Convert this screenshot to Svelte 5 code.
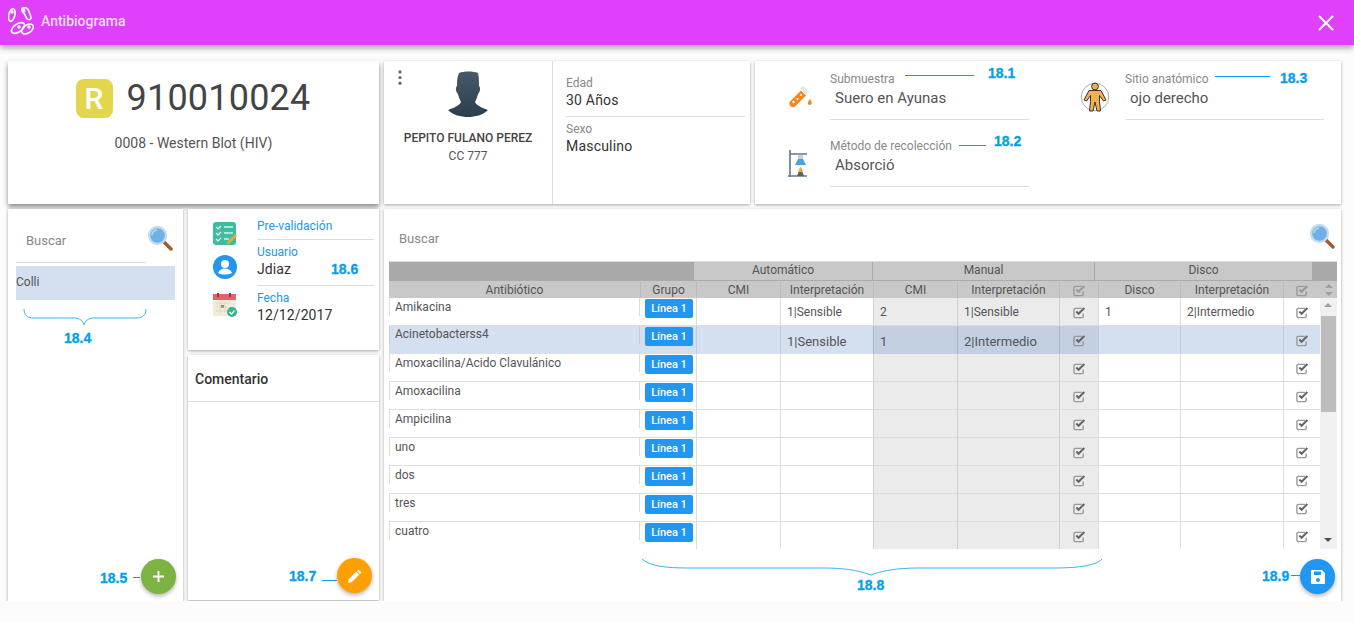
<script>
  const rows = [
    { name: 'Amikacina', auto: '1|Sensible', cmi: '2', manual: '1|Sensible', disco: '1', discoInt: '2|Intermedio' },
    { name: 'Acinetobacterss4', auto: '1|Sensible', cmi: '1', manual: '2|Intermedio', selected: true },
    { name: 'Amoxacilina/Acido Clavulánico' },
    { name: 'Amoxacilina' },
    { name: 'Ampicilina' },
    { name: 'uno' },
    { name: 'dos' },
    { name: 'tres' },
    { name: 'cuatro' }
  ];

  const notes = [
    { label: '18.1', x: 988, y: 66 },
    { label: '18.3', x: 1280, y: 71 },
    { label: '18.2', x: 994, y: 134 },
    { label: '18.6', x: 331, y: 262 },
    { label: '18.4', x: 64, y: 331 },
    { label: '18.5', x: 100, y: 571 },
    { label: '18.7', x: 289, y: 569 },
    { label: '18.8', x: 857, y: 578 },
    { label: '18.9', x: 1262, y: 569 }
  ];

  const leaders = [
    { x: 905, y: 75, w: 69 },
    { x: 1215, y: 76, w: 55 },
    { x: 959, y: 145, w: 27 },
    { x: 133, y: 577, w: 7 },
    { x: 322, y: 580, w: 15 },
    { x: 1291, y: 575, w: 9 }
  ];
</script>

{#snippet check()}
  <svg class="check" viewBox="0 0 14 14" width="13" height="13">
    <path d="M11 8v3a1.5 1.5 0 0 1-1.5 1.5h-7A1.5 1.5 0 0 1 1 11V4a1.5 1.5 0 0 1 1.5-1.5h7" fill="none" stroke="#999" stroke-width="1.5"/>
    <path d="M3.600 6 6 8.400 12.200 2.200" fill="none" stroke="#666" stroke-width="2.200"/>
  </svg>
{/snippet}

{#snippet lens()}
  <svg class="lens" viewBox="0 0 26 26" width="26" height="26">
    <path d="M16 16 24 24" stroke="#a5582a" stroke-width="3.400" stroke-linecap="round"/>
    <circle cx="10.500" cy="10.500" r="8.500" fill="#6fb1e6" stroke="#c5dcef" stroke-width="2.400"/>
    <path d="M5 10a5.500 5.500 0 0 1 5-5" fill="none" stroke="#a9d3f3" stroke-width="2"/>
  </svg>
{/snippet}

<header class="bar">
  <div class="brand">
    <svg viewBox="0 0 26 28" width="26" height="28" fill="none" stroke="#fff" stroke-width="1.600">
      <ellipse cx="3.800" cy="8" rx="3" ry="6.500" transform="rotate(14 3.800 8)"/>
      <path d="M14 1.500c3-2 6-.5 7 3s3 6 1.500 7.500-4 .5-5-3-5-5-3.500-7.500z"/>
      <ellipse cx="10" cy="21" rx="7.500" ry="4" transform="rotate(-35 10 21)"/>
      <ellipse cx="19.500" cy="22" rx="6.500" ry="4" transform="rotate(-35 19.500 22)"/>
      <circle cx="4" cy="5" r="1" fill="#fff"/>
      <circle cx="15.500" cy="3.500" r="1.200" fill="#fff"/>
      <circle cx="11" cy="20" r="1" fill="#fff"/>
      <circle cx="21" cy="20" r="1" fill="#fff"/>
    </svg>
    <span>Antibiograma</span>
  </div>
  <svg class="close" viewBox="0 0 16 16" width="16" height="16">
    <path d="M1 1 15 15M15 1 1 15" stroke="#fff" stroke-width="2"/>
  </svg>
</header>

<main class="page">
  <section class="top">
    <div class="card sample">
      <div class="sample-id">
        <span class="badge-r">R</span>
        <span class="number">910010024</span>
      </div>
      <p>0008 - Western Blot (HIV)</p>
    </div>

    <div class="card patient">
      <div class="who">
        <svg class="kebab" viewBox="0 0 4 16" width="4" height="15" fill="#666">
          <circle cx="2" cy="2" r="1.700"/><circle cx="2" cy="8" r="1.700"/><circle cx="2" cy="14" r="1.700"/>
        </svg>
        <svg class="avatar" viewBox="0 0 40 46" width="40" height="46">
          <defs>
            <linearGradient id="skin" x1="0" y1="0" x2="0" y2="1">
              <stop offset="0" stop-color="#44596a"/><stop offset="1" stop-color="#2c3e4c"/>
            </linearGradient>
          </defs>
          <path fill="url(#skin)" d="M11 2c5-2 14-2 19 0 1 4 1 9 1 13 2 2 1 6-1 8-1 4-2 6-3 8 2 4 8 6 13 8-5 5-13 7-20 7S5 44 0 39c5-2 11-4 13-8-1-2-2-4-3-8-2-2-3-6-1-8 0-4 0-9 2-13z"/>
        </svg>
        <strong>PEPITO FULANO PEREZ</strong>
        <span>CC 777</span>
      </div>
      <div class="facts">
        <div class="fact line"><label>Edad</label><b>30 Años</b></div>
        <div class="fact"><label>Sexo</label><b>Masculino</b></div>
      </div>
    </div>

    <div class="card origin">
      <div class="origin-col">
        <div class="origin-item">
          <svg class="tube" viewBox="0 0 26 26" width="26" height="26">
            <path d="M17 1.500l6.500 6.500-3 3-6.500-6.500z" fill="#e8e8e8"/>
            <path d="M15 6.500l5 5L9 22.500a3.600 3.600 0 0 1-5-5z" fill="#f5891f"/>
            <circle cx="7.500" cy="18" r="1.200" fill="#fff"/><circle cx="11.500" cy="15" r="1" fill="#fff"/><circle cx="15" cy="11" r="1" fill="#fff"/>
            <path d="M24 15c1.200 2 1.800 3 1.800 4a2 2 0 0 1-4 0c0-1 .9-2 2.200-4z" fill="#f5891f"/>
          </svg>
          <div class="field"><label>Submuestra</label><span>Suero en Ayunas</span></div>
        </div>
        <div class="origin-item">
          <svg viewBox="0 0 26 32" width="26" height="32">
            <path d="M7 2v27M5 28h19M7 6h17" stroke="#62798c" stroke-width="1.600" fill="none"/>
            <rect x="15" y="7" width="5" height="4" fill="#c9d0d6"/>
            <path d="M15 11h5l3 6H12z" fill="#4aa3df"/>
            <path d="M17.500 19c1.500 1.500 2 3 2 5h-4c0-2 .8-3.500 2-5z" fill="#f5a623"/>
            <path d="M14 28l1.500-4h4l1.500 4z" fill="#4f6475"/>
          </svg>
          <div class="field"><label>Método de recolección</label><span>Absorció</span></div>
        </div>
      </div>
      <div class="origin-col">
        <div class="origin-item site">
          <svg viewBox="0 0 30 30" width="30" height="30">
            <circle cx="15" cy="15" r="13.800" fill="none" stroke="#9aa5a5" stroke-width=".9"/>
            <circle cx="15" cy="4.500" r="3.400" fill="#f2b14e" stroke="#333" stroke-width="1"/>
            <path d="M9 8.500h12l5 9.500-2.500 1-4-5.500v6l1 9.500h-3.500l-2-9-2 9H9.500l1-9.500v-6l-4 5.500-2.500-1z" fill="#f2b14e" stroke="#333" stroke-width="1"/>
          </svg>
          <div class="field"><label>Sitio anatómico</label><span>ojo derecho</span></div>
        </div>
      </div>
    </div>
  </section>

  <section class="bottom">
    <div class="card list">
      <div class="list-search">
        <span class="search-text">Buscar</span>
        {@render lens()}
      </div>
      <div class="list-item">Colli</div>
      <button class="fab green" aria-label="Agregar">
        <svg viewBox="0 0 12 12" width="11" height="11"><path d="M6 0v12M0 6h12" stroke="#fff" stroke-width="2"/></svg>
      </button>
    </div>

    <div class="middle">
      <div class="card status">
        <div class="status-icons">
          <svg viewBox="0 0 24 24" width="24" height="24">
            <rect x="0" y="0" width="23" height="23" rx="3" fill="#3dbd9f"/>
            <path d="M3 5l2 2 3-3M3 11l2 2 3-3M3 17l2 2 3-3" fill="none" stroke="#fff" stroke-width="1.200"/>
            <path d="M11 5h9M11 11h9M11 17h5" stroke="#d4f1ea" stroke-width="1.300"/>
            <path d="M13 23l2-4 7-7 2 2-7 7z" fill="#f0a63a"/>
          </svg>
          <svg viewBox="0 0 24 24" width="24" height="24">
            <circle cx="12" cy="12" r="12" fill="#2196f3"/>
            <circle cx="12" cy="9" r="4" fill="#fff"/>
            <path d="M5 18c1-3 4-4.500 7-4.500s6 1.500 7 4.500c-2 1-4 1.500-7 1.500s-5-.5-7-1.500z" fill="#fff"/>
          </svg>
          <svg viewBox="0 0 24 24" width="24" height="24">
            <rect x="0" y="1" width="23" height="22" fill="#f0ebda"/>
            <rect x="0" y="1" width="23" height="6" fill="#ef5d68"/>
            <rect x="4" y="0" width="2" height="4" fill="#555"/><rect x="16" y="0" width="2" height="4" fill="#555"/>
            <rect x="8" y="12" width="3" height="3" fill="#8a7a66"/>
            <path d="M3 10h14M3 14h12M3 18h11M7 9v11M12 9v11" stroke="#d9d2bc" stroke-width=".8"/>
            <circle cx="19" cy="19" r="5" fill="#35b58c"/>
            <path d="M16.500 19l2 2 3-3.500" fill="none" stroke="#fff" stroke-width="1.200"/>
          </svg>
        </div>
        <div class="status-text">
          <div class="status-row first"><label>Pre-validación</label></div>
          <div class="status-row second"><label>Usuario</label><b>Jdiaz</b></div>
          <div class="status-row third"><label>Fecha</label><b>12/12/2017</b></div>
        </div>
      </div>
      <div class="card comment">
        <h3>Comentario</h3>
        <button class="fab orange" aria-label="Editar">
          <svg viewBox="0 0 16 16" width="16" height="16" fill="#fff"><path d="M11.500 1.500 14.500 4.500 13 6 10 3zM9.200 3.800l3 3L5 14l-4 1 1-4z"/></svg>
        </button>
      </div>
    </div>

    <div class="card results">
      <div class="results-search">
        <span class="search-text">Buscar</span>
        {@render lens()}
      </div>
      <div class="grid">
        <div class="groups">
          <div class="g-blank"></div>
          <div class="g-auto">Automático</div>
          <div class="g-manual">Manual</div>
          <div class="g-disco">Disco</div>
          <div class="g-end"></div>
        </div>
        <div class="grid-body">
          <table>
            <colgroup>
              <col style="width:251px"/><col style="width:56px"/><col style="width:84px"/><col style="width:93px"/>
              <col style="width:84px"/><col style="width:102px"/><col style="width:39px"/>
              <col style="width:82px"/><col style="width:103px"/><col style="width:37px"/>
            </colgroup>
            <thead>
              <tr>
                <th>Antibiótico</th><th>Grupo</th><th>CMI</th><th>Interpretación</th>
                <th>CMI</th><th>Interpretación</th><th>{@render check()}</th>
                <th>Disco</th><th>Interpretación</th><th>{@render check()}</th>
              </tr>
            </thead>
            <tbody>
              {#each rows as r}
                <tr class:selected={r.selected}>
                  <td class="name"><span>{r.name}</span></td>
                  <td class="group"><span class="pill">Línea 1</span></td>
                  <td></td>
                  <td>{r.auto ?? ''}</td>
                  <td class="manual">{r.cmi ?? ''}</td>
                  <td class="manual">{r.manual ?? ''}</td>
                  <td class="manual mark">{@render check()}</td>
                  <td>{r.disco ?? ''}</td>
                  <td>{r.discoInt ?? ''}</td>
                  <td class="mark">{@render check()}</td>
                </tr>
              {/each}
            </tbody>
          </table>
          <div class="scroll">
            <div class="scroll-head">
              <svg viewBox="0 0 8 12" width="8" height="12" fill="#a0a0a0"><path d="M0 4 4 0l4 4zM0 8h8l-4 4z"/></svg>
            </div>
            <div class="scroll-track">
              <svg class="up" viewBox="0 0 8 4" width="8" height="4" fill="#a0a0a0"><path d="M0 4 4 0l4 4z"/></svg>
              <div class="thumb"></div>
              <svg class="down" viewBox="0 0 8 4" width="8" height="4" fill="#505050"><path d="M0 0h8L4 4z"/></svg>
            </div>
          </div>
        </div>
      </div>
      <button class="fab blue" aria-label="Guardar">
        <svg viewBox="0 0 16 16" width="16" height="16"><path fill="#fff" fill-rule="evenodd" d="M2 1h10l3 3v10a1 1 0 0 1-1 1H2a1 1 0 0 1-1-1V2a1 1 0 0 1 1-1zm2 1.500V6h7V2.500zM8 9a2 2 0 1 0 0 4 2 2 0 0 0 0-4z"/></svg>
      </button>
    </div>
  </section>
</main>

<!-- anotaciones sobre la captura -->
<div class="notes">
  {#each leaders as l}
    <i class="leader" style="left:{l.x}px;top:{l.y}px;width:{l.w}px"></i>
  {/each}
  {#each notes as n}
    <span class="note" style="left:{n.x}px;top:{n.y}px">{n.label}</span>
  {/each}
  <svg class="brace one" viewBox="0 0 124 18" width="124" height="18" fill="none" stroke="#35b6ee">
    <path d="M1 1c0 6 3 9 10 9h40c6 0 9 3 10 7 1-4 4-7 10-7h42c7 0 10-3 10-9"/>
  </svg>
  <svg class="brace two" viewBox="0 0 462 18" width="462" height="18" fill="none" stroke="#35b6ee">
    <path d="M1 1c8 7 24 9 45 9h135c25 0 38 3 49 7 11-4 24-7 49-7h135c25 0 42-3 47-9"/>
  </svg>
</div>

<style>
  :global(body) {
    background: #fcfcfc;
    font-family: Roboto, "Liberation Sans", sans-serif;
    overflow: hidden;
  }

  .bar {
    height: 45px;
    box-sizing: border-box;
    background: #e040fb;
    box-shadow: 0 3px 6px rgba(0, 0, 0, 0.35);
    display: flex;
    align-items: center;
    justify-content: space-between;
    padding: 0 20px 3px 8px;
    position: relative;
  }

  .brand {
    display: flex;
    align-items: center;
    gap: 7px;
    color: #f6dcfd;
    font-size: 14px;
    font-weight: 500;
  }

  .close {
    display: block;
    margin-top: 4px;
  }

  .page {
    padding: 16px 13px 0 8px;
    display: flex;
    flex-direction: column;
    gap: 5px;
  }

  .top, .bottom {
    display: flex;
  }

  .card {
    background: #fff;
    box-shadow: 0 1px 3px rgba(0, 0, 0, 0.35);
    position: relative;
    box-sizing: border-box;
  }

  .top {
    height: 143px;
  }

  .sample {
    width: 371px;
    margin-right: 5px;
    box-shadow: 0 3px 5px rgba(0, 0, 0, 0.45);
    text-align: center;
    padding-top: 15px;
  }

  .sample-id {
    display: flex;
    justify-content: center;
    align-items: center;
    gap: 14px;
    padding-right: 1px;
  }

  .badge-r {
    width: 37px;
    height: 39px;
    border-radius: 8px;
    background: #e3d64d;
    color: #fff;
    font-size: 30px;
    font-weight: 500;
    line-height: 39px;
  }

  .number {
    font-size: 36px;
    letter-spacing: 0.2px;
    color: #444;
    line-height: 44px;
  }

  .sample p {
    margin: 15px 0 0;
    font-size: 14px;
    color: #555;
  }

  .patient {
    width: 366px;
    margin-right: 5px;
    display: flex;
  }

  .who {
    width: 169px;
    flex: none;
    border-right: 1px solid #ddd;
    display: flex;
    flex-direction: column;
    align-items: center;
    padding-top: 10px;
    position: relative;
    box-sizing: border-box;
    font-size: 12px;
    color: #555;
  }

  .kebab {
    position: absolute;
    left: 14px;
    top: 9px;
  }

  .who strong {
    font-weight: 500;
    color: #444;
    margin-top: 13px;
    line-height: 16px;
  }

  .who span {
    margin-top: 2px;
    line-height: 16px;
  }

  .facts {
    flex: 1;
    padding: 14px 5px 0 13px;
  }

  .fact {
    display: flex;
    flex-direction: column;
    font-size: 12px;
    height: 47px;
    box-sizing: border-box;
  }

  .fact.line {
    border-bottom: 1px solid #ddd;
    height: 42px;
    margin-bottom: 4px;
  }

  label {
    font-size: 12px;
    line-height: 16px;
    color: #888;
  }

  .fact b {
    font-size: 14px;
    font-weight: 400;
    letter-spacing: 0.2px;
    color: #333;
    line-height: 18px;
  }

  .origin {
    width: 586px;
    display: flex;
    padding: 9px 0 0 28px;
  }

  .origin-col {
    width: 295px;
    flex: none;
    display: flex;
    flex-direction: column;
    gap: 17px;
  }

  .origin-item {
    display: flex;
    align-items: center;
    gap: 21px;
    height: 50px;
  }

  .origin-item svg {
    flex: none;
    margin-top: 3px;
  }

  .origin-item svg.tube {
    margin-left: 3px;
    margin-right: -3px;
  }

  .origin-item.site {
    gap: 15px;
    margin-left: 2px;
  }

  .field {
    width: 199px;
    height: 50px;
    box-sizing: border-box;
    border-bottom: 1px solid #ddd;
    padding-top: 1px;
    display: flex;
    flex-direction: column;
    gap: 1px;
  }

  .field span {
    font-size: 15px;
    color: #555;
    padding-left: 5px;
    line-height: 20px;
  }

  .bottom {
    height: 392px;
  }

  .list {
    width: 175px;
    margin-right: 5px;
    padding: 8px 8px 0;
  }

  .list-search {
    display: flex;
    align-items: center;
    justify-content: space-between;
    height: 46px;
  }

  .list-search .search-text {
    flex: none;
    width: 130px;
    height: 46px;
    line-height: 48px;
    padding-left: 10px;
    box-sizing: border-box;
    border-bottom: 1px solid #ddd;
  }

  .list-search .lens {
    margin: -5px 2px 0 0;
  }

  .search-text {
    font-size: 13px;
    color: #888;
  }

  .list-item {
    margin-top: 3px;
    height: 34px;
    line-height: 32px;
    background: #d4dff0;
    font-size: 12px;
    color: #555;
  }

  .middle {
    width: 191px;
    margin-right: 5px;
    display: flex;
    flex-direction: column;
    gap: 5px;
  }

  .status {
    height: 141px;
    display: flex;
    padding: 13px 5px 0 25px;
  }

  .status-icons {
    width: 44px;
    flex: none;
    display: flex;
    flex-direction: column;
    gap: 9px;
  }

  .status-icons svg:last-child {
    margin-top: 5px;
  }

  .status-text {
    flex: 1;
    margin-top: -4px;
  }

  .status-row {
    display: flex;
    flex-direction: column;
    box-sizing: border-box;
    border-bottom: 1px solid #ddd;
  }

  .status-row label {
    color: #2196f3;
  }

  .status-row b {
    font-size: 14px;
    font-weight: 400;
    letter-spacing: 0.1px;
    color: #333;
    line-height: 18px;
  }

  .status-row.first { height: 22px; }
  .status-row.second { height: 46px; padding-top: 4px; }
  .status-row.third { border: 0; padding-top: 4px; }

  .comment {
    flex: none;
    height: 245px;
  }

  .comment h3 {
    margin: 0;
    height: 47px;
    box-sizing: border-box;
    border-bottom: 1px solid #ddd;
    padding: 16px 0 0 7px;
    font-size: 14px;
    font-weight: 500;
    line-height: 16px;
    color: #333;
  }

  .results {
    width: 957px;
    padding: 0 4px 0 5px;
  }

  .results-search {
    height: 52px;
    display: flex;
    align-items: center;
    justify-content: space-between;
    padding: 6px 2px 0 10px;
    box-sizing: border-box;
  }

  .results-search .lens {
    margin-top: -4px;
  }

  .groups {
    display: flex;
    height: 19px;
    font-size: 12px;
    line-height: 17px;
    color: #555;
    text-align: center;
    background: #c8c8c8;
    border-top: 1px solid #ddd;
    box-sizing: border-box;
  }

  .g-blank { width: 305px; background: #a9a9a9; }
  .g-auto { width: 179px; border-right: 1px solid #aaa; box-sizing: border-box; }
  .g-manual { width: 222px; border-right: 1px solid #aaa; box-sizing: border-box; }
  .g-disco { width: 217px; }
  .g-end { width: 25px; background: #a9a9a9; }

  .grid-body {
    display: flex;
    height: 269px;
    overflow: hidden;
  }

  table {
    width: 931px;
    table-layout: fixed;
    border-collapse: separate;
    border-spacing: 0;
    font-size: 12px;
    color: #555;
    align-self: flex-start;
  }

  th {
    height: 18px;
    padding: 0;
    font-weight: 400;
    background: #c8c8c8;
    border-left: 1px solid #bbb;
    border-top: 1px solid #aaa;
    text-align: center;
    color: #555;
    box-sizing: border-box;
  }

  th:first-child {
    border-left: 0;
  }

  th .check path {
    stroke: #999;
  }

  td {
    height: 28px;
    padding: 0 6px;
    box-sizing: border-box;
    border-left: 1px solid #ddd;
    border-bottom: 1px solid #ddd;
    vertical-align: middle;
    white-space: nowrap;
    overflow: hidden;
  }

  td.name {
    vertical-align: top;
    padding: 0;
    line-height: 16px;
    border-left: 0;
  }

  td.name span {
    display: block;
    height: 18px;
    padding: 1px 0 0 5px;
    box-sizing: border-box;
    border-left: 1px solid #ddd;
    border-right: 1px solid #ddd;
  }

  td.group {
    padding: 1px 3px 0 5px;
    vertical-align: top;
    border-left: 0;
  }

  .pill {
    display: block;
    height: 19px;
    line-height: 19px;
    border-radius: 2px;
    background: #2196f3;
    color: #fff;
    font-size: 11px;
    font-weight: 500;
    text-align: center;
  }

  td.manual {
    background: #ebebeb;
    border-left-color: #d0d0d0;
  }

  td.mark, th:has(.check) {
    padding: 0;
    text-align: center;
  }

  .check {
    display: inline-block;
    vertical-align: middle;
  }

  tr.selected td {
    background: #d4dff0;
    font-size: 13px;
    padding-top: 3px;
    border-left-color: #c0cbdc;
    border-bottom-color: #d4dff0;
  }

  tr.selected td.name {
    font-size: 12px;
    padding-top: 0;
  }

  tr.selected td.name span {
    padding-top: 0;
    border-left-color: #c0cbdc;
    border-right-color: #c0cbdc;
  }

  tr.selected td.group {
    padding-top: 1px;
  }

  tr.selected td.manual {
    background: #c1cfe1;
    border-left-color: #aab8ca;
    border-bottom-color: #c1cfe1;
  }

  tr.selected td.mark {
    padding: 0 0 1px;
  }

  .scroll {
    width: 17px;
    flex: none;
    display: flex;
    flex-direction: column;
  }

  .scroll-head {
    height: 18px;
    background: #c8c8c8;
    border-top: 1px solid #aaa;
    box-sizing: border-box;
    display: flex;
    align-items: center;
    justify-content: center;
  }

  .scroll-track {
    flex: 1;
    background: #f1f1f1;
    position: relative;
  }

  .scroll-track .up {
    position: absolute;
    left: 4px;
    top: 5px;
  }

  .scroll-track .down {
    position: absolute;
    left: 4px;
    bottom: 7px;
  }

  .thumb {
    position: absolute;
    left: 1px;
    right: 1px;
    top: 18px;
    height: 96px;
    background: #bdbdbd;
  }

  .fab {
    position: absolute;
    right: 7px;
    bottom: 7px;
    width: 35px;
    height: 35px;
    border: 0;
    border-radius: 50%;
    padding: 0;
    display: flex;
    align-items: center;
    justify-content: center;
    box-shadow: 0 2px 4px rgba(0, 0, 0, 0.3);
  }

  .fab.green { background: #7cb342; }
  .fab.orange { background: #ffa000; }
  .fab.blue { background: #2196f3; right: 6px; }

  .notes {
    position: absolute;
    left: 0;
    top: 0;
    pointer-events: none;
  }

  .note {
    position: absolute;
    font-family: "Liberation Sans", Arial, sans-serif;
    font-size: 14px;
    font-weight: 700;
    line-height: 15px;
    color: #03a0e8;
    -webkit-text-stroke: 0.3px #03a0e8;
    white-space: nowrap;
  }

  .leader {
    position: absolute;
    height: 1px;
    background: #03a0e8;
  }

  .brace {
    position: absolute;
  }

  .brace.one { left: 23px; top: 308px; }
  .brace.two { left: 641px; top: 558px; }
</style>
